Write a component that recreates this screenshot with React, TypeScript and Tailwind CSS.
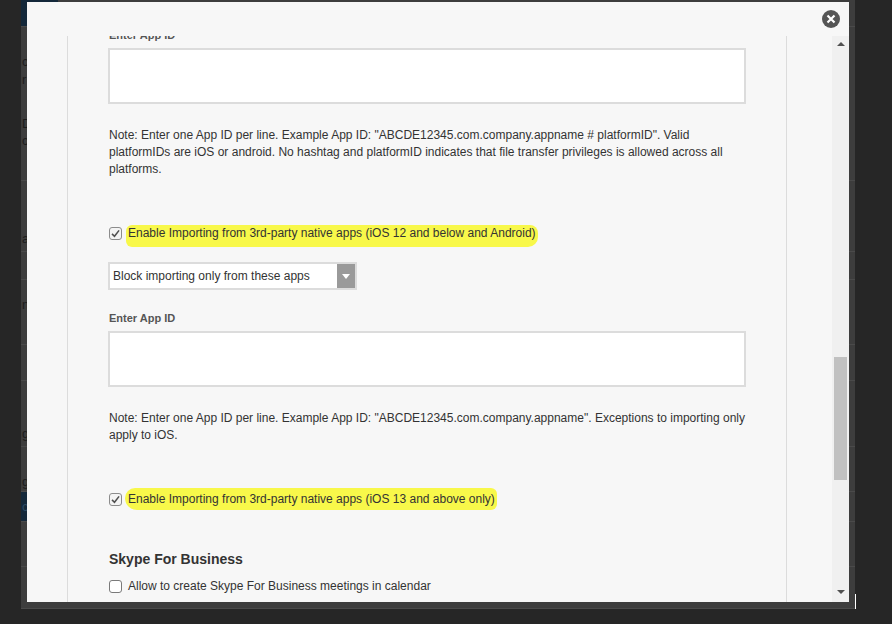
import type { ReactNode } from 'react';

function CheckBox({ checked }: { checked?: boolean }) {
  return (
    <span
      className={`flex h-[13px] w-[13px] shrink-0 items-center justify-center rounded-[3px] border ${
        checked ? 'border-[#8c8c8c] bg-[#f4f4f4]' : 'border-[#7a7a7a] bg-white'
      }`}
    >
      {checked && (
        <svg viewBox="0 0 12 12" className="h-[11px] w-[11px]">
          <path d="M2.2 6.4 L4.9 9 L9.9 2.6" fill="none" stroke="#505050" strokeWidth="1.7" />
        </svg>
      )}
    </span>
  );
}

// yellow marker stroke behind the label text
function Marked({ children, wide }: { children: ReactNode; wide?: boolean }) {
  return (
    <span className="relative inline-block leading-[20px]">
      <span
        className={`absolute bg-[#f8f84a] ${
          wide
            ? '-left-[3px] -right-[2px] top-[-1px] -bottom-[1px] rounded-[10px_6px_6px_12px]'
            : '-left-[2px] -right-[2px] top-[2px] -bottom-[4px] rounded-[6px_8px_10px_6px]'
        }`}
      />
      <span className="relative">{children}</span>
    </span>
  );
}

function Row({ checked, children, className = '' }: { checked?: boolean; children: ReactNode; className?: string }) {
  return (
    <div className={`flex h-[20px] items-center gap-[6px] pl-[1px] ${className}`}>
      <CheckBox checked={checked} />
      <span className="text-[12px] leading-[20px] text-[#333]">{children}</span>
    </div>
  );
}

function Label({ children, className = '' }: { children: ReactNode; className?: string }) {
  return <div className={`pl-[1px] text-[11px] font-bold leading-[14px] text-[#555] ${className}`}>{children}</div>;
}

function Box({ className = '' }: { className?: string }) {
  return <div className={`h-[56px] w-[638px] border-2 border-[#dcdcdc] bg-white ${className}`} />;
}

function Note({ children, className = '' }: { children: ReactNode; className?: string }) {
  return <p className={`pl-[1px] text-[12px] leading-[17px] text-[#333] ${className}`}>{children}</p>;
}

// dimmed page behind the dialog (only thin strips show)
const behindRows = [
  { h: 27, blue: true, lines: [] as { t: number; s: string }[] },
  { h: 154, lines: [{ t: 27, s: 'c' }, { t: 45, s: 'r' }, { t: 89, s: 'D' }, { t: 106, s: 'c' }] },
  { h: 71, lines: [{ t: 50, s: 'a' }] },
  { h: 28, lines: [] },
  { h: 65, lines: [{ t: 17, s: 'n' }] },
  { h: 36, lines: [] },
  { h: 66, lines: [{ t: 45, s: 'g' }] },
  { h: 45, lines: [{ t: 27, s: 'g' }] },
  { h: 30, blue: true, lines: [{ t: 7, s: 'c' }] },
  { h: 45, lines: [] },
  { h: 42, lines: [] },
];

export default function App() {
  return (
    <div className="relative h-[624px] w-[892px] overflow-hidden bg-[#262626] font-['Liberation_Sans',Arial,sans-serif]">
      <div className="ml-[21px] flex h-[609px] w-[834px] flex-col bg-[#3d3d3d]">
        {behindRows.map((r, i) => (
          <div
            key={i}
            className={`relative shrink-0 border-b border-[#4a4a4a] ${r.blue ? 'bg-[#3d3d3d]' : ''}`}
            style={{ height: r.h }}
          >
            {r.blue && <div className="h-full w-[37px] bg-[#14283a]" />}
            {r.lines.map((l, j) => (
              <span
                key={j}
                className={`absolute left-[1px] text-[13px] leading-[16px] ${r.blue ? 'text-[#2c4a63]' : 'text-[#1c1c1c]'}`}
                style={{ top: l.t }}
              >
                {l.s}
              </span>
            ))}
          </div>
        ))}
      </div>
      <div className="absolute left-[855px] top-[594px] h-[15px] w-px bg-white" />

      {/* dialog */}
      <div className="absolute left-[27px] top-[2px] flex h-[600px] w-[822px] flex-col bg-[#f7f7f7]">
        <button className="absolute right-[9px] top-[8px] flex h-[18px] w-[18px] items-center justify-center rounded-full bg-[#555]">
          <svg viewBox="0 0 10 10" className="h-[10px] w-[10px]">
            <path d="M1.5 1.5 L8.5 8.5 M8.5 1.5 L1.5 8.5" stroke="#fff" strokeWidth="2.2" />
          </svg>
        </button>

        <div className="mt-[34px] flex h-[566px] overflow-hidden">
          <div className="w-[40px] shrink-0" />
          <div className="h-full w-[720px] shrink-0 overflow-hidden border-x border-[#dcdcdc] pl-[40px]">
            <div className="-mt-[8px]">
              <Label className="mb-[6px]">Enter App ID</Label>
              <Box />
              <Note className="mt-[23px] w-[638px]">
                Note: Enter one App ID per line. Example App ID: "ABCDE12345.com.company.appname # platformID". Valid
                platformIDs are iOS or android. No hashtag and platformID indicates that file transfer privileges is
                allowed across all platforms.
              </Note>

              <Row checked className="mt-[45px]">
                <Marked>Enable Importing from 3rd-party native apps (iOS 12 and below and Android)</Marked>
              </Row>

              <div className="mt-[19px] flex h-[28px] w-[249px] items-stretch border-2 border-[#dcdcdc] bg-white">
                <span className="flex-1 pl-[3px] text-[12px] leading-[24px] text-[#333]">
                  Block importing only from these apps
                </span>
                <span className="flex w-[18px] items-center justify-center bg-[#9a9a9a]">
                  <svg viewBox="0 0 8 5" className="h-[5px] w-[8px]">
                    <path d="M0 0 H8 L4 5 Z" fill="#fff" />
                  </svg>
                </span>
              </div>

              <Label className="mb-[6px] mt-[21px]">Enter App ID</Label>
              <Box />
              <Note className="mt-[23px] w-[638px]">
                Note: Enter one App ID per line. Example App ID: "ABCDE12345.com.company.appname". Exceptions to
                importing only apply to iOS.
              </Note>

              <Row checked className="mt-[45px]">
                <Marked wide>Enable Importing from 3rd-party native apps (iOS 13 and above only)</Marked>
              </Row>

              <h3 className="mt-[41px] pl-[1px] text-[14px] font-bold leading-[18px] text-[#333]">Skype For Business</h3>
              <Row className="mt-[8px]">Allow to create Skype For Business meetings in calendar</Row>
            </div>
          </div>
          <div className="w-[45px] shrink-0" />
          {/* scrollbar */}
          <div className="flex w-[17px] shrink-0 flex-col items-center bg-[#f0f0f0]">
            <svg viewBox="0 0 8 4" className="mt-[6px] h-[4px] w-[8px]">
              <path d="M0 4 H8 L4 0 Z" fill="#505050" />
            </svg>
            <div className="mt-[311px] h-[123px] w-[13px] bg-[#c1c1c1]" />
            <div className="flex-1" />
            <svg viewBox="0 0 8 4" className="mb-[8px] h-[4px] w-[8px]">
              <path d="M0 0 H8 L4 4 Z" fill="#505050" />
            </svg>
          </div>
        </div>
      </div>
    </div>
  );
}
